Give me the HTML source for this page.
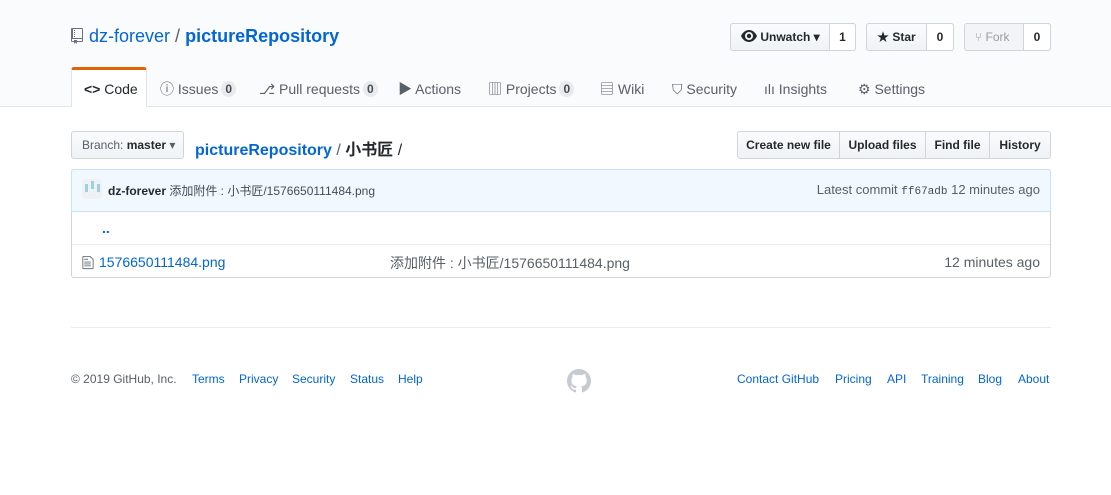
<!DOCTYPE html>
<html><head><meta charset="utf-8"><style>
*{box-sizing:border-box;margin:0;padding:0}
body{width:1111px;height:495px;background:#fff;font-family:"Liberation Sans","Noto Sans CJK SC",sans-serif;font-size:14px;color:#24292e;position:relative;overflow:hidden}
.a{position:absolute;white-space:nowrap}
.blue{color:#0366d6}
.hdr{position:absolute;left:0;top:0;width:1111px;height:107px;background:#fafbfc;border-bottom:1px solid #e1e4e8}
.btn{position:absolute;height:28px;border:1px solid #d1d5da;border-radius:3px;background:linear-gradient(#fafbfc,#eff3f6);font-size:12px;font-weight:bold;line-height:26px}
.cnt{position:absolute;top:-1px;height:28px;border:1px solid #d1d5da;border-radius:0 3px 3px 0;background:#fff;text-align:center;line-height:26px;font-weight:bold;font-size:12px}
.tab{position:absolute;top:80px;height:18px;line-height:18px;font-size:14px;color:#586069}
.ctr{display:inline-block;vertical-align:top;margin-top:1px;background:#e8eaec;border-radius:10px;padding:0 4px;font-size:12px;font-weight:bold;color:#444d56;line-height:16px;margin-left:3px}
.fb{position:absolute;top:131px;height:28px;border:1px solid #d1d5da;background:linear-gradient(#fafbfc,#eff3f6);font-size:12px;font-weight:bold;line-height:26px;text-align:center}
.foot{position:absolute;top:372px;font-size:12px;color:#0366d6}
</style></head><body>
<div class="hdr"></div>
<svg class="a" style="left:71px;top:28px" width="12" height="16" viewBox="0 0 12 16"><path fill="#6a737d" d="M4 9H3V8h1v1zm0-3H3v1h1V6zm0-2H3v1h1V4zm0-2H3v1h1V2zm8-1v12c0 .55-.45 1-1 1H6v2l-1.5-1.5L3 16v-2H1c-.55 0-1-.45-1-1V1c0-.55.45-1 1-1h10c.55 0 1 .45 1 1zm-1 10H1v2h2v-1h3v1h5v-2zm0-10H2v9h9V1z"/></svg>
<div class="a" style="left:89px;top:26px;font-size:18px"><span class="blue">dz-forever</span> <span style="color:#586069">/</span> <b class="blue">pictureRepository</b></div>

<div class="btn" style="left:730px;top:23px;width:126px"><span style="position:absolute;left:10px;top:0"><svg width="16" height="12" viewBox="0 0 16 12" style="vertical-align:-1px"><path fill="#24292e" d="M8 0C4.5 0 1.5 2.5 0 6c1.5 3.5 4.5 6 8 6s6.5-2.5 8-6c-1.5-3.5-4.5-6-8-6zm0 10a4 4 0 110-8 4 4 0 010 8zm0-6.2a2.2 2.2 0 100 4.4 2.2 2.2 0 000-4.4z"/></svg> Unwatch ▾</span><div class="cnt" style="left:98px;width:27px">1</div></div>
<div class="btn" style="left:866px;top:23px;width:88px"><span style="position:absolute;left:10px">★ Star</span><div class="cnt" style="left:59px;width:28px">0</div></div>
<div class="btn" style="left:964px;top:23px;width:87px;color:#959da5;background:#f3f4f6"><span style="position:absolute;left:10px;font-weight:normal">&#x2442; Fork</span><div class="cnt" style="left:58px;width:28px;color:#24292e">0</div></div>

<div class="a" style="left:71px;top:67px;width:76px;height:40px;background:#fff;border:1px solid #e1e4e8;border-top:3px solid #e36209;border-bottom:none;border-radius:3px 3px 0 0"></div>
<div class="tab" style="left:84px;color:#24292e"><b>&lt;&gt;</b> Code</div>
<div class="tab" style="left:160px">ⓘ Issues<span class="ctr">0</span></div>
<div class="tab" style="left:259px">⎇ Pull requests<span class="ctr">0</span></div>
<div class="tab" style="left:398px">▶ Actions</div>
<div class="tab" style="left:488px">▥ Projects<span class="ctr">0</span></div>
<div class="tab" style="left:600px">▤ Wiki</div>
<div class="tab" style="left:672px">⛉ Security</div>
<div class="tab" style="left:764px">ılı Insights</div>
<div class="tab" style="left:858px">⚙ Settings</div>

<div class="btn" style="left:71px;top:131px;width:113px;font-weight:normal;color:#586069;padding-left:10px">Branch: <b style="color:#24292e">master</b> ▾</div>
<div class="a" style="left:195px;top:136px;font-size:16px"><b class="blue">pictureRepository</b> <span style="color:#586069">/</span> <b>小书匠</b> /</div>

<div class="fb" style="left:737px;width:103px;border-radius:3px 0 0 3px">Create new file</div>
<div class="fb" style="left:839px;width:87px">Upload files</div>
<div class="fb" style="left:925px;width:65px">Find file</div>
<div class="fb" style="left:989px;width:62px;border-radius:0 3px 3px 0">History</div>

<div class="a" style="left:71px;top:169px;width:980px;height:109px;border:1px solid #d1d5da;border-radius:3px"></div>
<div class="a" style="left:71px;top:169px;width:980px;height:43px;background:#f1f8ff;border:1px solid #c8e1ff;border-radius:3px 3px 0 0"></div>
<div class="a" style="left:82px;top:179px;width:20px;height:20px;background:#eef2f4;border-radius:3px"><svg width="20" height="20"><rect x="3" y="5" width="3" height="8" fill="#9cd0dc"/><rect x="9" y="2" width="3" height="8" fill="#9cd0dc"/><rect x="15" y="5" width="3" height="8" fill="#9cd0dc"/></svg></div>
<div class="a" style="left:108px;top:182px;font-size:12px;color:#444d56"><b style="color:#24292e">dz-forever</b> 添加附件 : 小书匠/1576650111484.png</div>
<div class="a" style="right:71px;top:182px;font-size:13px;color:#586069">Latest commit <span style="font-family:'Liberation Mono',monospace;font-size:11px;color:#444d56">ff67adb</span> 12 minutes ago</div>
<div class="a" style="left:72px;top:244px;width:978px;height:1px;background:#eaecef"></div>
<div class="a blue" style="left:102px;top:220px;font-weight:bold">..</div>
<svg class="a" style="left:82px;top:255px" width="12" height="15" viewBox="0 0 12 16"><path fill="#6a737d" d="M6 5H2V4h4v1zM2 8h7V7H2v1zm0 2h7V9H2v1zm0 2h7v-1H2v1zm10-7.5V14c0 .55-.45 1-1 1H1c-.55 0-1-.45-1-1V2c0-.55.45-1 1-1h7.5L12 4.5zM11 5L8 2H1v12h10V5z"/></svg>
<div class="a blue" style="left:99px;top:254px">1576650111484.png</div>
<div class="a" style="left:390px;top:253px;color:#586069">添加附件 : 小书匠/1576650111484.png</div>
<div class="a" style="right:71px;top:254px;color:#586069">12 minutes ago</div>

<div class="a" style="left:71px;top:327px;width:980px;height:1px;background:#eaecef"></div>
<div class="foot" style="left:71px;color:#586069">© 2019 GitHub, Inc.</div>
<div class="foot" style="left:192px">Terms</div>
<div class="foot" style="left:239px">Privacy</div>
<div class="foot" style="left:292px">Security</div>
<div class="foot" style="left:350px">Status</div>
<div class="foot" style="left:398px">Help</div>
<svg class="a" style="left:567px;top:369px" width="24" height="24" viewBox="0 0 16 16"><path fill="#c6cbd1" d="M8 0C3.58 0 0 3.58 0 8c0 3.54 2.29 6.53 5.47 7.59.4.07.55-.17.55-.38 0-.19-.01-.82-.01-1.49-2.01.37-2.53-.49-2.69-.94-.09-.23-.48-.94-.82-1.13-.28-.15-.68-.52-.01-.53.63-.01 1.08.58 1.23.82.72 1.21 1.87.87 2.33.66.07-.52.28-.87.51-1.07-1.78-.2-3.64-.89-3.640-3.95 0-.87.31-1.59.82-2.15-.08-.2-.36-1.02.08-2.12 0 0 .67-.21 2.2.82.64-.18 1.32-.27 2-.27.68 0 1.36.09 2 .27 1.53-1.04 2.2-.82 2.2-.82.44 1.1.16 1.92.08 2.12.51.56.82 1.27.82 2.15 0 3.07-1.87 3.75-3.65 3.95.29.25.54.73.54 1.48 0 1.07-.01 1.93-.01 2.2 0 .21.15.46.55.38A8.013 8.013 0 0016 8c0-4.42-3.58-8-8-8z"/></svg>
<div class="foot" style="left:737px">Contact GitHub</div>
<div class="foot" style="left:835px">Pricing</div>
<div class="foot" style="left:887px">API</div>
<div class="foot" style="left:921px">Training</div>
<div class="foot" style="left:978px">Blog</div>
<div class="foot" style="left:1018px">About</div>
</body></html>
